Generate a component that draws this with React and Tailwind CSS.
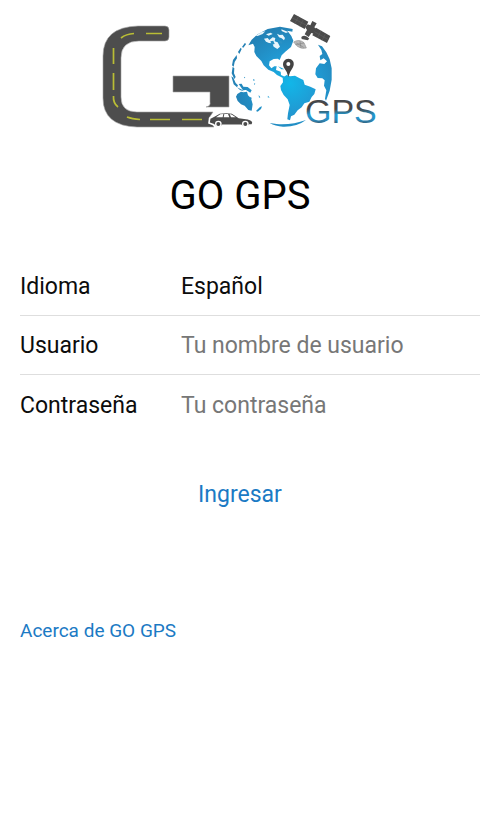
function Logo() {
  return (
    <svg
      viewBox="0 0 280 120"
      className="w-[280px] h-[120px]"
      role="img"
      aria-label="GO GPS"
    >
      <defs>
        <radialGradient id="globe" gradientUnits="userSpaceOnUse" cx="195" cy="235" r="175">
          <stop offset="0" stopColor="#12b6e8" />
          <stop offset="0.5" stopColor="#2199d2" />
          <stop offset="1" stopColor="#2380b4" />
        </radialGradient>
        <linearGradient id="gps" x1="0" y1="0" x2="0" y2="1">
          <stop offset="0.45" stopColor="#45474a" />
          <stop offset="0.6" stopColor="#1f9ad2" />
          <stop offset="0.72" stopColor="#2a8fc4" />
          <stop offset="0.85" stopColor="#35586c" />
        </linearGradient>
      </defs>

      {/* Carretera */}
      <path
        d="M65 14q4 0 4 4v7q0 4-4 4H39Q21 29 21 46V85Q21 100 37 100H113L109 106L114 115H37Q3 114 3 86V44Q3 15 38 14Z"
        fill="#4d4d4d"
        stroke="#a3a3a3"
        strokeWidth="0.6"
      />
      <path
        d="M73 64H129V95H106Q111 94 110 90V80H73Z"
        fill="#4d4d4d"
        stroke="#a3a3a3"
        strokeWidth="0.6"
      />
      <path
        d="M46 21.5H62M21 26Q26 22 34 21.5M13.500 36V52M13.500 61V78M13.500 84Q13 91 18 95M27 105Q32 107 40 107.500M50 107.500H70M82 107.500H102"
        fill="none"
        stroke="#b9bd35"
        strokeWidth="1.7"
      />

      <g transform="translate(125 -7) scale(.33333)">
        {/* Continentes */}
        <g fill="url(#globe)">
          <path d="M70 121L80 104L98 88L128 72L165 65L203 72L202 80L187 77L199 93L205 107L198 126L181 140L170 151L164 165L158 161L146 162L134 169L132 181L139 190L148 184H155L153 195L167 200L168 210L181 216L174 219L156 210L146 201L130 194L116 181L109 168L94 153L88 141L89 126L84 116Z" />
          <path d="M173 218L185 210L195 214L210 212L224 220L235 225L239 239L256 245L272 253L268 267L260 276L253 290L238 295L230 307L218 316L208 329L198 334L195 346L187 343L189 325L194 300L188 283L176 270L168 255L166 243L174 232Z" />
          <path d="M279 119L291 124L304 142L314 163L320 190V224L314 257L303 287L300 281L304 256L297 242L299 226L292 220L278 219L271 208L273 190L284 175L298 177L306 169L296 160L286 166L284 153L292 147L289 135Z" />
          <path d="M37 267L48 260L55 262L66 260L69 271L78 280L83 298L80 317L70 315L59 302L48 298L38 288L33 275Z" />
          <path d="M19 214L25 218L32 234L39 241L36 247L26 238ZM41 237L50 236L55 245L68 246L80 256L76 263L63 255L54 256ZM36 247L51 254L56 259L45 255ZM23 185L28 190L27 205L32 216L28 222L20 205ZM24 165L35 150L36 160L29 171L26 185L21 181ZM39 141L47 128L50 132L43 147ZM51 126L60 113L63 118L55 128Z" />
          <path d="M93 318L105 306L111 304L108 312L98 320ZM84 222L90 225L86 228ZM74 275L81 279L78 282ZM129 272L134 278L128 277ZM101 270L106 277L102 278ZM58 215L61 218L57 220ZM87 235L91 236L88 240Z" />
          <path d="M134 354L155 357Q202 360 243 345Q216 366 174 365Q151 364 134 354Z" />
          <path d="M159 184L169 188L178 193L169 193Z" />
        </g>
        {/* Bahías y lagos */}
        <path
          d="M92 92L108 82L121 79L113 87L98 93ZM117 101L128 99L133 105L143 97L151 99L149 109L158 112L165 125L157 132L146 125L142 115L132 114L123 110ZM156 86L164 90L173 89L180 99L177 106L170 100L162 97ZM123 88L137 83L143 87L131 92ZM169 73L190 81L183 84L170 78Z"
          fill="#e9f5fb"
        />
        <path
          d="M136 109L145 107L149 117L140 119ZM158 101L165 107L173 110L171 118L161 112Z"
          fill="#2b91c4"
        />

        {/* Marcador */}
        <path
          d="M190 216Q187 200 177 188Q171 177 177 168Q182 161 190 161Q199 161 204 168Q209 177 203 188Q194 200 190 216Z"
          fill="#434343"
        />
        <circle cx="190" cy="177" r="6" fill="#fff" />

        {/* Satélite */}
        <g fill="#4b4b4b">
          <path d="M207 27L250 50L239 72L195 48ZM273 68L316 93L306 114L262 91Z" />
          <path d="M262 48L275 55L268 67L277 74L267 86L259 84L251 96L239 88L246 75L241 67L248 58L256 61Z" />
          <path d="M229 96Q240 86 253 101L248 106L230 102Z" />
          <path
            d="M221 34L209 56M236 42L224 64M288 77L277 99M302 85L291 107M201 38L245 61M268 80L311 104"
            stroke="#666"
            strokeWidth="1.500"
          />
        </g>
        <path
          d="M206 111Q222 101 237 113L244 129Q229 133 217 124Z"
          fill="#b8b8b8"
          stroke="#929292"
          strokeWidth="2"
        />
        <path d="M214 114L236 127M225 109L228 129M211 119L237 114" stroke="#777" strokeWidth="1.500" />

        {/* Auto */}
        <path
          d="M-48 354L-46 340L-33 333L-17 324Q5 320 22 324L42 337L69 341Q85 346 84 354L81 360H73Q68 370 56 367L48 361H-7Q-13 370 -26 367L-34 359Z"
          fill="#4b4b4b"
          stroke="#fff"
          strokeWidth="5"
        />
        <path
          d="M-27 337L-14 328L-5 327L-7 337ZM-2 327H9L13 337H-4ZM14 327L21 329L32 337H18Z"
          fill="#fff"
        />
        <circle cx="-20" cy="357" r="10" fill="#fff" />
        <circle cx="-20" cy="357" r="6" fill="#4b4b4b" />
        <circle cx="61" cy="357" r="10" fill="#fff" />
        <circle cx="61" cy="357" r="6" fill="#4b4b4b" />
      </g>

      <text
        x="205"
        y="111"
        fontFamily="Liberation Sans, sans-serif"
        fontSize="34"
        fill="url(#gps)"
      >
        GPS
      </text>
    </svg>
  );
}

function Row({ id, label, children }) {
  return (
    <div className="flex h-[59px] items-center border-b border-[#dedede] pt-0.5 last:border-b-0">
      <label htmlFor={id} className="w-[161px] shrink-0">
        {label}
      </label>
      {children}
    </div>
  );
}

const fieldClass =
  "min-w-0 flex-1 appearance-none bg-transparent outline-none placeholder:text-[#777777]";

function App() {
  return (
    <main className="min-h-screen bg-white pt-3 font-[Roboto,sans-serif] text-[#0c0c0c]">
      <div className="flex justify-center">
        <Logo />
      </div>
      <h1 className="mt-8 text-center text-[40px] leading-[64px] text-black">GO GPS</h1>

      <form className="mt-[29px]" onSubmit={(e) => e.preventDefault()}>
        <div className="pl-5 text-[23px] leading-8">
          <Row id="idioma" label="Idioma">
            <select id="idioma" className={fieldClass}>
              <option>Español</option>
            </select>
          </Row>
          <Row id="usuario" label="Usuario">
            <input
              id="usuario"
              type="text"
              placeholder="Tu nombre de usuario"
              className={fieldClass}
            />
          </Row>
          <Row id="contrasena" label="Contraseña">
            <input
              id="contrasena"
              type="password"
              placeholder="Tu contraseña"
              className={fieldClass}
            />
          </Row>
        </div>
        <div className="mt-[45px] flex justify-center">
          <button type="submit" className="text-[23px] leading-8 text-[#1b7ac4]">
            Ingresar
          </button>
        </div>
      </form>

      <a href="#acerca" className="mt-[106px] ml-5 inline-block text-[19px] leading-7 text-[#1b7ac4]">
        Acerca de GO GPS
      </a>
    </main>
  );
}

export default App;
